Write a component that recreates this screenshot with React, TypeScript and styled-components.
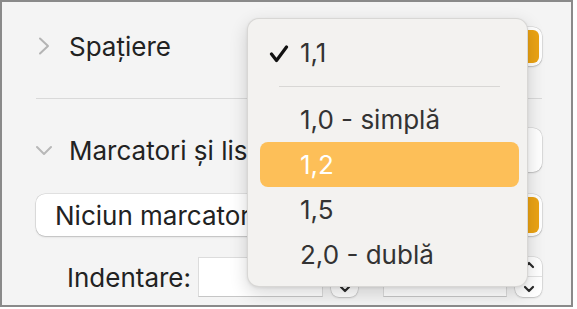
import React from "react";
import styled, { createGlobalStyle } from "styled-components";

const GlobalStyle = createGlobalStyle`
  html, body {
    margin: 0;
    padding: 0;
    background: #ffffff;
  }
  body {
    font-family: "Inter", "Liberation Sans", sans-serif;
    -webkit-font-smoothing: antialiased;
  }
`;

const ORANGE = "#eba314";

const Frame = styled.div`
  position: relative;
  width: 573px;
  height: 307px;
  box-sizing: border-box;
  border: 2px solid #8a8a8a;
  background: #f4f4f4;
  padding: 24px 29px 0 34px;
  display: flex;
  flex-direction: column;
  overflow: hidden;
`;

const Header = styled.div<{ $h: number; $mt?: number }>`
  display: flex;
  align-items: center;
  height: ${(p) => p.$h}px;
  margin-top: ${(p) => p.$mt ?? 0}px;
`;

const Disclosure = styled.svg`
  width: 16px;
  height: 18px;
  flex: none;
  margin-right: 17px;
`;

const Title = styled.span`
  font-size: 26px;
  color: #222222;
  white-space: nowrap;
`;

const Separator = styled.div`
  height: 1px;
  background: #d9d9d9;
  margin-top: 32px;
`;

const Popup = styled.div<{ $w?: number; $h: number }>`
  margin-left: auto;
  width: ${(p) => (p.$w ? `${p.$w}px` : "100%")};
  height: ${(p) => p.$h}px;
  box-sizing: border-box;
  background: #ffffff;
  border-radius: 9px;
  box-shadow: 0 0 0 0.5px rgba(0, 0, 0, 0.14), 0 1px 2px rgba(0, 0, 0, 0.16);
  display: flex;
  align-items: center;
  padding: 3px;
`;

const PopupLabel = styled.span`
  flex: 1;
  padding-left: 16px;
  font-size: 26px;
  color: #222222;
  white-space: nowrap;
`;

const Cap = styled.div`
  margin-left: auto;
  width: 30px;
  align-self: stretch;
  background: ${ORANGE};
  border-radius: 6px;
`;

const FieldRow = styled.div`
  display: flex;
  align-items: center;
  height: 40px;
  margin-top: 21px;
  padding-left: 31px;
`;

const FieldLabel = styled.span`
  width: 131px;
  flex: none;
  font-size: 26px;
  color: #222222;
`;

const Field = styled.div<{ $w: number }>`
  width: ${(p) => p.$w}px;
  height: 40px;
  box-sizing: border-box;
  background: #ffffff;
  border: 1px solid #dcdcdc;
  border-bottom-color: #c6c6c6;
  flex: none;
`;

const Stepper = styled.div<{ $ml: number; $mr?: number }>`
  width: 27px;
  height: 40px;
  margin-left: ${(p) => p.$ml}px;
  margin-right: ${(p) => p.$mr ?? 0}px;
  flex: none;
  background: #ffffff;
  border-radius: 8px;
  box-shadow: 0 0 0 0.5px rgba(0, 0, 0, 0.14), 0 1px 2px rgba(0, 0, 0, 0.16);
  display: flex;
  flex-direction: column;
  align-items: center;
  justify-content: space-around;
`;

const StepDivider = styled.div`
  width: 100%;
  height: 1px;
  background: #e2e2e2;
`;

const Menu = styled.div`
  position: absolute;
  left: 245px;
  top: 16px;
  width: 281px;
  height: 269px;
  box-sizing: border-box;
  padding: 11px 8px 10px 12px;
  background: #f3f2f0;
  border: 1px solid rgba(0, 0, 0, 0.11);
  border-radius: 12px;
  box-shadow: 0 6px 18px rgba(0, 0, 0, 0.16), 0 1px 3px rgba(0, 0, 0, 0.08);
`;

const Item = styled.div<{ $active?: boolean }>`
  position: relative;
  height: 45px;
  display: flex;
  align-items: center;
  padding-left: 40px;
  border-radius: 8px;
  font-size: 26px;
  background: ${(p) => (p.$active ? "#fdbf58" : "transparent")};
  color: ${(p) => (p.$active ? "#ffffff" : "#333333")};
`;

const Check = styled.svg`
  position: absolute;
  left: 9px;
  top: 15px;
`;

const MenuGap = styled.div`
  height: 22px;
  display: flex;
  align-items: center;
  padding: 0 19px;
`;

const MenuLine = styled.div`
  flex: 1;
  height: 1px;
  background: #d8d7d5;
`;

const ChevronRight = () => (
  <Disclosure viewBox="0 0 16 18">
    <polyline points="4,1.5 12,9 4,16.5" fill="none" stroke="#b4b4b4" strokeWidth="2" strokeLinecap="round" strokeLinejoin="round" />
  </Disclosure>
);

const ChevronDown = () => (
  <Disclosure viewBox="0 0 16 18">
    <polyline points="1,6 8,13 15,6" fill="none" stroke="#b8b8b8" strokeWidth="2" strokeLinecap="round" strokeLinejoin="round" />
  </Disclosure>
);

const StepArrow = ({ up }: { up?: boolean }) => (
  <svg width="12" height="8" viewBox="0 0 12 8">
    <polyline
      points={up ? "2,6 6,2 10,6" : "2,2 6,6 10,2"}
      fill="none"
      stroke="#2a2a2a"
      strokeWidth="2.2"
      strokeLinecap="round"
      strokeLinejoin="round"
    />
  </svg>
);

const spacing = ["1,0 - simplă", "1,2", "1,5", "2,0 - dublă"];

export default function App() {
  return (
    <>
      <GlobalStyle />
      <Frame>
        <Header $h={40}>
          <ChevronRight />
          <Title>Spațiere</Title>
          <Popup $w={150} $h={39}>
            <Cap />
          </Popup>
        </Header>

        <Separator />

        <Header $h={44} $mt={29}>
          <ChevronDown />
          <Title>Marcatori și liste</Title>
          <Popup $w={120} $h={44} />
        </Header>

        <Header $h={42} $mt={22}>
          <Popup $h={42}>
            <PopupLabel>Niciun marcator</PopupLabel>
            <Cap />
          </Popup>
        </Header>

        <FieldRow>
          <FieldLabel>Indentare:</FieldLabel>
          <Field $w={125} />
          <Stepper $ml={8} $mr={25}>
            <StepArrow up />
            <StepDivider />
            <StepArrow />
          </Stepper>
          <Field $w={124} />
          <Stepper $ml={8}>
            <StepArrow up />
            <StepDivider />
            <StepArrow />
          </Stepper>
        </FieldRow>

        <Menu>
          <Item>
            <Check width="20" height="18" viewBox="0 0 20 18">
              <polyline points="2.5,9 7.5,15.5 17.5,2" fill="none" stroke="#111" strokeWidth="3.2" strokeLinecap="round" strokeLinejoin="round" />
            </Check>
            1,1
          </Item>
          <MenuGap>
            <MenuLine />
          </MenuGap>
          {spacing.map((s) => (
            <Item key={s} $active={s === "1,2"}>
              {s}
            </Item>
          ))}
        </Menu>
      </Frame>
    </>
  );
}
